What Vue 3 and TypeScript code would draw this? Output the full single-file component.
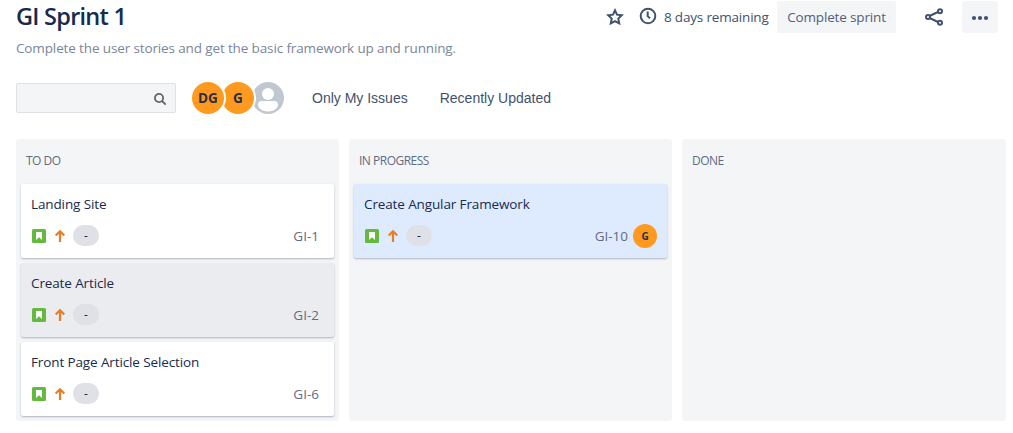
<script setup lang="ts">
interface Issue {
  id: string
  title: string
  tone: 'plain' | 'hovered' | 'selected'
  assignee?: string
}

interface Column {
  name: string
  issues: Issue[]
}

const columns: Column[] = [
  {
    name: 'TO DO',
    issues: [
      { id: 'GI-1', title: 'Landing Site', tone: 'plain' },
      { id: 'GI-2', title: 'Create Article', tone: 'hovered' },
      { id: 'GI-6', title: 'Front Page Article Selection', tone: 'plain' },
    ],
  },
  {
    name: 'IN PROGRESS',
    issues: [{ id: 'GI-10', title: 'Create Angular Framework', tone: 'selected', assignee: 'G' }],
  },
  { name: 'DONE', issues: [] },
]
</script>

<template>
  <main class="page">
    <header class="header">
      <h1 class="title">GI Sprint 1</h1>
      <div class="actions">
        <svg class="star" width="18" height="18" viewBox="0 0 18 18">
          <path d="M9 2.3l2 4.400 4.800.6-3.500 3.300.9 4.800L9 13.100l-4.200 2.300.9-4.800L2.200 7.300l4.800-.6z" />
        </svg>
        <svg class="clock" width="18" height="18" viewBox="0 0 18 18">
          <circle cx="9" cy="9" r="7.300" />
          <path d="M8.700 4.500v4.600l2.300 2.300" />
        </svg>
        <span class="remaining">8 days remaining</span>
        <button class="button complete">Complete sprint</button>
        <svg class="share" width="20" height="20" viewBox="0 0 20 20">
          <path d="M5.500 9L14 5M5.500 11l8.500 4" />
          <circle cx="4" cy="10" r="2" />
          <circle cx="16" cy="4.200" r="2" />
          <circle cx="16" cy="15.800" r="2" />
        </svg>
        <button class="button more" aria-label="More">
          <svg width="18" height="6" viewBox="0 0 18 6">
            <circle cx="3" cy="3" r="2.100" />
            <circle cx="9" cy="3" r="2.100" />
            <circle cx="15" cy="3" r="2.100" />
          </svg>
        </button>
      </div>
    </header>
    <p class="goal">Complete the user stories and get the basic framework up and running.</p>

    <div class="filters">
      <div class="search">
        <svg width="14" height="14" viewBox="0 0 14 14">
          <circle cx="6" cy="6" r="4.100" />
          <path d="M9 9l3.700 3.700" />
        </svg>
      </div>
      <div class="avatars">
        <span class="avatar">DG</span>
        <span class="avatar">G</span>
        <span class="avatar unassigned">
          <svg width="32" height="32" viewBox="0 0 32 32">
            <circle cx="16" cy="12" r="6" />
            <path d="M6 22.500c0-2 1.500-3.500 3.500-3.500h13c2 0 3.500 1.500 3.500 3.500 0 4-4.500 7-10 7s-10-3-10-7z" />
          </svg>
        </span>
      </div>
      <span class="quick mine">Only My Issues</span>
      <span class="quick">Recently Updated</span>
    </div>

    <div class="board">
      <section v-for="column in columns" :key="column.name" class="column">
        <h2 class="column-name">{{ column.name }}</h2>
        <article v-for="issue in column.issues" :key="issue.id" class="card" :class="issue.tone">
          <div class="card-title">{{ issue.title }}</div>
          <div class="meta">
            <svg class="story" width="14" height="14" viewBox="0 0 14 14">
              <rect width="14" height="14" rx="1.500" />
              <path d="M4 3h6v8L7 8.300 4 11z" />
            </svg>
            <svg class="priority" width="12" height="14" viewBox="0 0 12 14">
              <path d="M6 13V2.500M1.700 6.500L6 2.300 10.300 6.500" />
            </svg>
            <span class="points">-</span>
            <span class="key">{{ issue.id }}</span>
            <span v-if="issue.assignee" class="avatar small">{{ issue.assignee }}</span>
          </div>
        </article>
      </section>
    </div>
  </main>
</template>

<style>
body {
  background: #fff;
}
</style>

<style scoped>
.page {
  box-sizing: border-box;
  width: 1013px;
  height: 433px;
  padding: 0 7px 12px 16px;
  overflow: hidden;
  display: flex;
  flex-direction: column;
  font-family: 'Open Sans', 'Noto Sans', sans-serif;
  font-size: 13.5px;
  color: #172b4d;
}
.header {
  display: flex;
  justify-content: space-between;
  height: 34px;
  padding-right: 8px;
}
.title {
  margin: 0;
  font-size: 23.5px;
  font-weight: 600;
  line-height: 33px;
  letter-spacing: -0.75px;
}
.actions {
  display: flex;
  align-items: center;
  color: #42526e;
}
.actions svg {
  display: block;
  fill: none;
  stroke: #42526e;
  stroke-width: 2;
}
.star {
  margin-right: 15px;
}
.clock {
  position: relative;
  top: -1px;
  margin-right: 7px;
}
.remaining {
  width: 106px;
  margin-right: 7px;
  white-space: nowrap;
  letter-spacing: -0.18px;
}
.button {
  display: flex;
  align-items: center;
  justify-content: center;
  box-sizing: border-box;
  height: 32px;
  padding: 0;
  border: 0;
  border-radius: 3px;
  background: #f4f5f7;
  color: #505f79;
  font: inherit;
}
.complete {
  width: 119px;
  letter-spacing: -0.15px;
  margin-right: 28px;
}
.share {
  margin-right: 18px;
}
.more {
  width: 36px;
}
.actions .more svg {
  margin-top: 2px;
  fill: #42526e;
  stroke: none;
}
.goal {
  margin: 4px 0 0;
  height: 20px;
  line-height: 20px;
  color: #7a869a;
  letter-spacing: -0.13px;
}
.filters {
  display: flex;
  align-items: center;
  height: 32px;
  margin-top: 24px;
}
.search {
  box-sizing: border-box;
  display: flex;
  align-items: center;
  justify-content: flex-end;
  width: 160px;
  height: 30px;
  padding: 2px 8px 0 0;
  border: 1px solid #dfe1e6;
  border-radius: 2px;
  background: #f4f5f7;
  margin-right: 16px;
}
.search svg {
  fill: none;
  stroke: #666;
  stroke-width: 1.8;
}
.avatars {
  display: flex;
  width: 92px;
  margin-right: 28px;
}
.avatar {
  display: flex;
  align-items: center;
  justify-content: center;
  flex: none;
  width: 32px;
  height: 32px;
  margin-right: -2px;
  border-radius: 50%;
  background: #ff991f;
  color: #253048;
  font-size: 13.5px;
  line-height: 18px;
  font-weight: 700;
}
.avatars .avatar {
  position: relative;
  z-index: 1;
}
.avatars .avatar:first-child {
  z-index: 2;
  box-shadow: 0 0 0 2px #fff;
}
.avatars .avatar:nth-child(2) {
  box-shadow: 0 0 0 2px #fff;
}
.avatars .unassigned {
  z-index: 0;
  background: #c1c7d0;
}
.unassigned svg {
  fill: #fff;
}
.quick {
  font-family: 'Liberation Sans', Arial, sans-serif;
  font-size: 14px;
  color: #42526e;
  white-space: nowrap;
}
.mine {
  margin-right: 32px;
}
.board {
  display: grid;
  grid-template-columns: 323px 323px 324px;
  gap: 10px;
  height: 282px;
  margin-top: 25px;
}
.column {
  box-sizing: border-box;
  display: flex;
  flex-direction: column;
  gap: 5px;
  padding: 0 5px;
  border-radius: 3px;
  background: #f4f5f7;
}
.column-name {
  box-sizing: border-box;
  height: 40px;
  margin: 0;
  padding: 12px 5px 0;
  font-size: 12px;
  line-height: 20px;
  font-weight: 400;
  letter-spacing: -0.5px;
  color: #5e6c84;
}
.card {
  box-sizing: border-box;
  height: 74px;
  padding: 10px 10px 0;
  border-radius: 2px;
  background: #fff;
  box-shadow: 0 1px 2px rgba(9, 30, 66, 0.3);
}
.card.hovered {
  background: #ebecf0;
}
.card.selected {
  background: #deebff;
}
.card-title {
  height: 20px;
  line-height: 20px;
  letter-spacing: -0.12px;
}
.meta {
  display: flex;
  align-items: center;
  height: 24px;
  margin-top: 10px;
}
.story {
  margin: 0 8px 0 1px;
}
.story rect {
  fill: #63ba3c;
}
.story path {
  fill: #fff;
}
.priority {
  margin-right: 7px;
  fill: none;
  stroke: #ea7d24;
  stroke-width: 2.2;
}
.points {
  width: 26px;
  height: 21px;
  margin-top: -1px;
  border-radius: 10.5px;
  background: #dfe1e6;
  font-size: 12px;
  line-height: 22px;
  text-align: center;
}
.key {
  margin-left: auto;
  margin-right: 5px;
  color: #5e6c84;
}
.avatar.small {
  width: 24px;
  height: 24px;
  margin: 0;
  font-size: 10px;
}
</style>
